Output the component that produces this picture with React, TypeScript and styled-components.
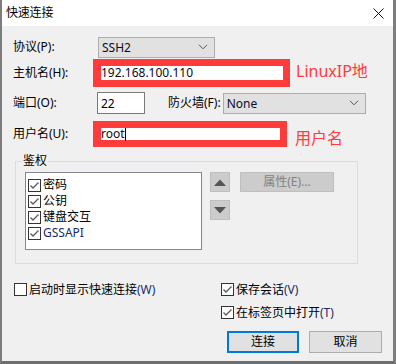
import React from "react";
import styled, { createGlobalStyle } from "styled-components";

const Global = createGlobalStyle`
  html, body { margin: 0; padding: 0; background: #7a7a7a; }
  body { font-family: "Noto Sans", "Noto Sans CJK SC", sans-serif; font-size: 12px; color: #000; }
  * { box-sizing: border-box; }
`;

const Frame = styled.div`
  width: 396px;
  height: 364px;
  border-left: 2px solid #7d7d7d;
  border-right: 3px solid #7d7d7d;
  border-bottom: 3px solid #6e6e6e;
  display: flex;
  flex-direction: column;
  background: #f0f0f0;
`;

const TitleBar = styled.div`
  height: 26px;
  background: #fff;
  display: flex;
  align-items: center;
  justify-content: space-between;
  padding: 0 9px 0 4px;
  font-size: 12px;
  flex-shrink: 0;
`;

const Title = styled.span`
  line-height: 14px;
  letter-spacing: -0.2px;
`;

const Body = styled.div`
  flex: 1;
  padding: 11px 0 0 11px;
  display: flex;
  flex-direction: column;
`;

const Row = styled.div<{ $mt?: number; $h: number }>`
  display: flex;
  align-items: center;
  height: ${(p) => p.$h}px;
  margin-top: ${(p) => p.$mt ?? 0}px;
`;

const Label = styled.span<{ $w?: number; $ml?: number }>`
  width: ${(p) => (p.$w ? `${p.$w}px` : "auto")};
  margin-left: ${(p) => p.$ml ?? 0}px;
  flex-shrink: 0;
  white-space: nowrap;
  line-height: 14px;
`;

const Select = styled.div<{ $w: number; $h: number; $ml?: number }>`
  width: ${(p) => p.$w}px;
  height: ${(p) => p.$h}px;
  margin-left: ${(p) => p.$ml ?? 0}px;
  background: #e1e1e1;
  border: 1px solid #adadad;
  display: flex;
  align-items: center;
  justify-content: space-between;
  padding: 0 6px 0 3px;
  color: #0a0a30;
`;

const RedBox = styled.div<{ $w: number; $h: number }>`
  width: ${(p) => p.$w}px;
  height: ${(p) => p.$h}px;
  border-style: solid;
  border-color: #ff3b3b;
  border-width: 7px 7px 7px 8px;
  background: #fff;
  display: flex;
  align-items: center;
`;

const InputText = styled.span`
  line-height: 14px;
  color: #0a0a20;
  display: flex;
  align-items: center;
`;

const Caret = styled.span`
  display: inline-block;
  width: 1px;
  height: 13px;
  background: #000;
`;

const Note = styled.span<{ $ml: number; $mt?: number }>`
  color: #ff3b3b;
  font-size: 16px;
  margin-left: ${(p) => p.$ml}px;
  margin-top: ${(p) => p.$mt ?? 0}px;
  line-height: 18px;
  white-space: nowrap;
`;

const PortInput = styled.div`
  width: 48px;
  height: 22px;
  border: 1px solid #7a7a7a;
  background: #fff;
  padding-left: 3px;
  display: flex;
  align-items: center;
`;

const Group = styled.div`
  position: relative;
  margin-top: 14px;
  margin-left: 2px;
  width: 343px;
  height: 103px;
  border: 1px solid #dcdcdc;
  display: flex;
  padding: 10px 0 0 9px;
  gap: 8px;
`;

const Legend = styled.span`
  position: absolute;
  top: -8px;
  left: 6px;
  padding: 0 1px;
  background: #f0f0f0;
  line-height: 14px;
`;

const List = styled.div`
  width: 177px;
  height: 78px;
  border: 1px solid #828790;
  background: #fff;
  padding: 4px 0 0 2px;
  display: flex;
  flex-direction: column;
`;

const CheckRow = styled.label<{ $h?: number }>`
  display: flex;
  align-items: center;
  height: ${(p) => p.$h ?? 16}px;
  gap: 2px;
  white-space: nowrap;
  line-height: 14px;
`;

const Box = styled.span`
  width: 13px;
  height: 13px;
  border: 1px solid #333;
  background: #fff;
  display: inline-flex;
  align-items: center;
  justify-content: center;
  flex-shrink: 0;
`;

const Mnemo = styled.span`
  color: #1a2a66;
`;

const SideCol = styled.div`
  display: flex;
  flex-direction: column;
  gap: 8px;
`;

const ArrowBtn = styled.div`
  width: 20px;
  height: 20px;
  background: #cccccc;
  border: 1px solid #bfbfbf;
  display: flex;
  align-items: center;
  justify-content: center;
`;

const PropBtn = styled.div`
  margin-left: 2px;
  width: 94px;
  height: 20px;
  background: #cccccc;
  border: 1px solid #bfbfbf;
  color: #838383;
  display: flex;
  align-items: center;
  justify-content: center;
  line-height: 14px;
`;

const Bottom = styled.div`
  margin-top: 19px;
  display: grid;
  grid-template-columns: 207px auto;
  row-gap: 10px;
  padding-left: 1px;
`;

const Buttons = styled.div`
  margin-top: 12px;
  margin-left: 214px;
  display: flex;
  gap: 10px;
`;

const Btn = styled.div<{ $primary?: boolean; $w: number }>`
  width: ${(p) => p.$w}px;
  height: 22px;
  background: #e1e1e1;
  border: ${(p) => (p.$primary ? "2px solid #0078d7" : "1px solid #adadad")};
  display: flex;
  align-items: center;
  justify-content: center;
  line-height: 14px;
`;

const Check = ({ on }: { on: boolean }) => (
  <Box>
    {on && (
      <svg width="11" height="11" viewBox="0 0 11 11">
        <path d="M1.5 5.5 L4 8 L9.5 2.5" fill="none" stroke="#5a5a5a" strokeWidth="1.3" />
      </svg>
    )}
  </Box>
);

const Chevron = () => (
  <svg width="10" height="6" viewBox="0 0 10 6">
    <path d="M1 0.8 L5 4.8 L9 0.8" fill="none" stroke="#555" strokeWidth="1" />
  </svg>
);

const Tri = ({ up }: { up: boolean }) => (
  <svg width="12" height="7" viewBox="0 0 12 7">
    <path d={up ? "M0 7 L6 0.5 L12 7 Z" : "M0 0 L12 0 L6 6.5 Z"} fill="#555" />
  </svg>
);

export default function App() {
  return (
    <>
      <Global />
      <Frame>
        <TitleBar>
          <Title>快速连接</Title>
          <svg width="11" height="11" viewBox="0 0 11 11">
            <path d="M0.5 0.5 L10.5 10.5 M10.5 0.5 L0.5 10.5" stroke="#111" strokeWidth="1" />
          </svg>
        </TitleBar>
        <Body>
          <Row $h={20}>
            <Label $w={85}>协议(P):</Label>
            <Select $w={117} $h={21}>
              <span>SSH2</span>
              <Chevron />
            </Select>
          </Row>
          <Row $mt={2} $h={28}>
            <Label $w={80}>主机名(H):</Label>
            <RedBox $w={197} $h={28}>
              <InputText>192.168.100.110</InputText>
            </RedBox>
            <Note $ml={6} $mt={-4}>LinuxIP地</Note>
          </Row>
          <Row $mt={5} $h={22}>
            <Label $w={84}>端口(O):</Label>
            <PortInput>22</PortInput>
            <Label $ml={23}>防火墙(F):</Label>
            <Select $w={143} $h={21} $ml={2}>
              <span>None</span>
              <Chevron />
            </Select>
          </Row>
          <Row $mt={7} $h={26}>
            <Label $w={80}>用户名(U):</Label>
            <RedBox $w={194} $h={26}>
              <InputText>
                root
                <Caret />
              </InputText>
            </RedBox>
            <Note $ml={8} $mt={8}>用户名</Note>
          </Row>
          <Group>
            <Legend>鉴权</Legend>
            <List>
              <CheckRow><Check on /><span>密码</span></CheckRow>
              <CheckRow><Check on /><span>公钥</span></CheckRow>
              <CheckRow><Check on /><span>键盘交互</span></CheckRow>
              <CheckRow><Check on /><Mnemo>GSSAPI</Mnemo></CheckRow>
            </List>
            <SideCol>
              <ArrowBtn><Tri up /></ArrowBtn>
              <ArrowBtn><Tri up={false} /></ArrowBtn>
            </SideCol>
            <PropBtn>属性(E)...</PropBtn>
          </Group>
          <Bottom>
            <CheckRow $h={13}><Check on={false} /><span>启动时显示快速连接<Mnemo>(W)</Mnemo></span></CheckRow>
            <CheckRow $h={13}><Check on /><span>保存会话<Mnemo>(V)</Mnemo></span></CheckRow>
            <span />
            <CheckRow $h={13}><Check on /><span>在标签页中打开<Mnemo>(T)</Mnemo></span></CheckRow>
          </Bottom>
          <Buttons>
            <Btn $primary $w={72}>连接</Btn>
            <Btn $w={73}>取消</Btn>
          </Buttons>
        </Body>
      </Frame>
    </>
  );
}
